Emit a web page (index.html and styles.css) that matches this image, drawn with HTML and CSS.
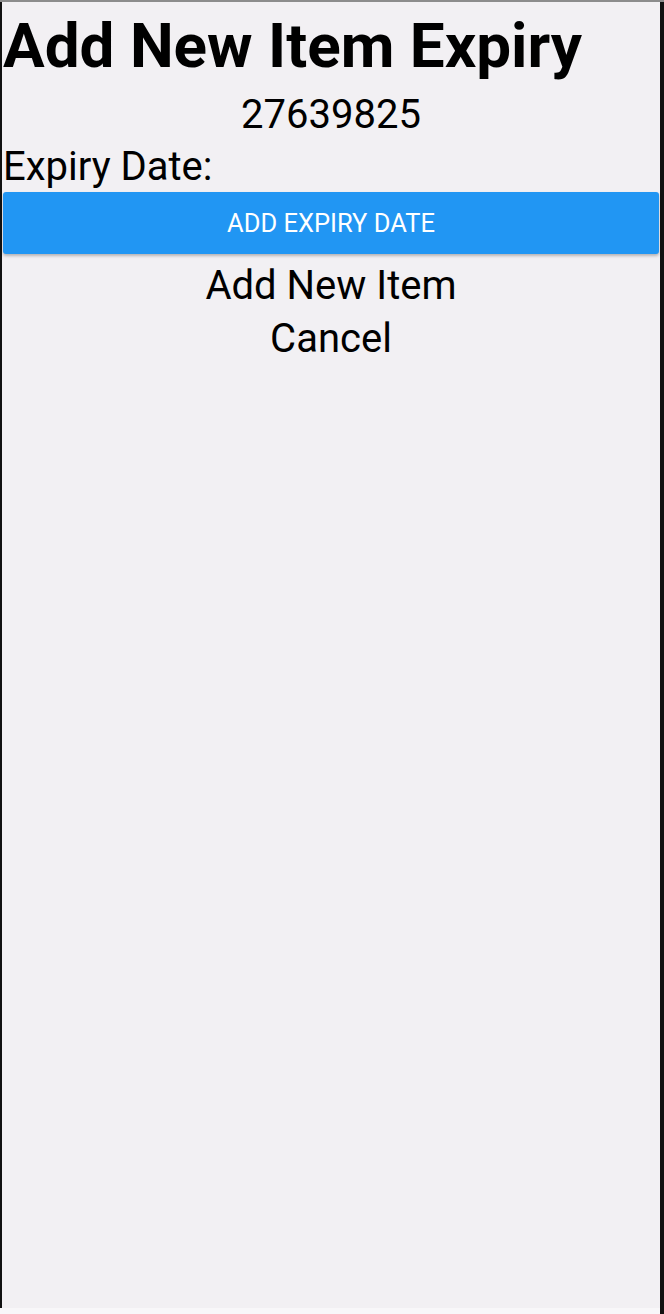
FILE: index.html
```html
<!DOCTYPE html>
<html>
<head>
<meta charset="utf-8">
<link rel="stylesheet" href="styles.css">
</head>
<body>
<div class="frame">
  <div class="screen">
    <h1 class="title">Add New Item Expiry</h1>
    <div class="code">27639825</div>
    <div class="label">Expiry Date:</div>
    <button class="btn">ADD EXPIRY DATE</button>
    <div class="link">Add New Item</div>
    <div class="link">Cancel</div>
  </div>
  <div class="bottom-strip"></div>
</div>
</body>
</html>
```
FILE: styles.css
```css
html, body { margin: 0; padding: 0; }
body {
  width: 664px;
  height: 1314px;
  background: #111;
  font-family: Roboto, "Noto Sans", sans-serif;
  overflow: hidden;
}
.frame {
  height: 1314px;
  box-sizing: border-box;
  border-top: 2px solid #8c8c8c;
  padding-right: 4px;
  background: #111;
  display: flex;
  flex-direction: column;
}
.screen {
  flex: 1;
  background: #f2f0f3;
  border-left: 2px solid #111;
  display: flex;
  flex-direction: column;
  align-items: stretch;
}
.bottom-strip {
  height: 6px;
  background: #f8f7f9;
}
.title {
  margin: 8px 0 10px 0;
  font-size: 62px;
  font-weight: 700;
  line-height: 72px;
  color: #000;
  padding-left: 1px;
}
.code {
  text-align: center;
  font-size: 40px;
  line-height: 46px;
  color: #000;
}
.label {
  margin-top: 5px;
  font-size: 40px;
  line-height: 48px;
  color: #000;
  padding-left: 1px;
}
.btn {
  margin: 1px 1px 0 1px;
  height: 62px;
  border: 0;
  border-radius: 3px;
  background: #2196f3;
  color: #fff;
  font-family: Roboto, sans-serif;
  font-size: 25.5px;
  box-shadow: 0 2px 3px rgba(0,0,0,0.25);
  padding: 0;
}
.link {
  text-align: center;
  font-size: 40px;
  line-height: 53px;
  color: #000;
}
.btn + .link { margin-top: 5px; }
```
